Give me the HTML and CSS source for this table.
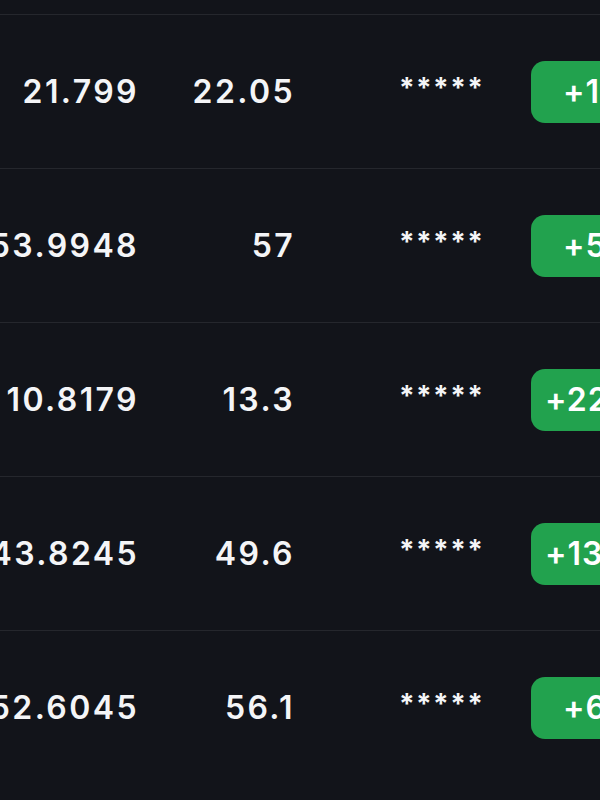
FILE: index.html
```html
<!DOCTYPE html>
<html>
<head>
<meta charset="utf-8">
<link rel="stylesheet" href="styles.css">
</head>
<body>
<div class="table">
  <div class="top-spacer"></div>
  <div class="row">
    <div class="cell num">21.799</div>
    <div class="cell price">22.05</div>
    <div class="cell mask">*****</div>
    <div class="cell"><div class="badge">+1</div></div>
  </div>
  <div class="row">
    <div class="cell num">53.9948</div>
    <div class="cell price">57</div>
    <div class="cell mask">*****</div>
    <div class="cell"><div class="badge">+5</div></div>
  </div>
  <div class="row">
    <div class="cell num">10.8179</div>
    <div class="cell price">13.3</div>
    <div class="cell mask">*****</div>
    <div class="cell"><div class="badge badge-wide">+22</div></div>
  </div>
  <div class="row">
    <div class="cell num">43.8245</div>
    <div class="cell price">49.6</div>
    <div class="cell mask">*****</div>
    <div class="cell"><div class="badge badge-wide">+13</div></div>
  </div>
  <div class="row">
    <div class="cell num">52.6045</div>
    <div class="cell price">56.1</div>
    <div class="cell mask">*****</div>
    <div class="cell"><div class="badge">+6</div></div>
  </div>
</div>
</body>
</html>
```
FILE: styles.css
```css
html, body {
  margin: 0;
  padding: 0;
  background: #12141a;
  width: 600px;
  height: 800px;
  overflow: hidden;
}
.table {
  font-family: Inter, "Noto Sans", sans-serif;
  color: #f4f5f7;
}
.top-spacer {
  height: 14px;
}
.row {
  display: flex;
  align-items: center;
  height: 153px;
  border-top: 1px solid #25272d;
}
.cell {
  font-size: 32px;
  font-weight: 600;
  letter-spacing: 2.4px;
  white-space: nowrap;
}
.num {
  width: 139px;
  flex: none;
  display: flex;
  justify-content: flex-end;
}
.price {
  width: 156px;
  flex: none;
  display: flex;
  justify-content: flex-end;
}
.mask {
  margin-left: 104px;
  width: 132px;
  flex: none;
  font-size: 28px;
  font-weight: 700;
  letter-spacing: 1.4px;
  position: relative;
  top: -4px;
}
.badge {
  width: 140px;
  height: 62px;
  box-sizing: border-box;
  border-radius: 14px;
  background: #22a24e;
  color: #ffffff;
  display: flex;
  align-items: center;
  padding-left: 32px;
  font-size: 32px;
  font-weight: 600;
  letter-spacing: 1px;
}
.badge-wide {
  padding-left: 14px;
}
```
